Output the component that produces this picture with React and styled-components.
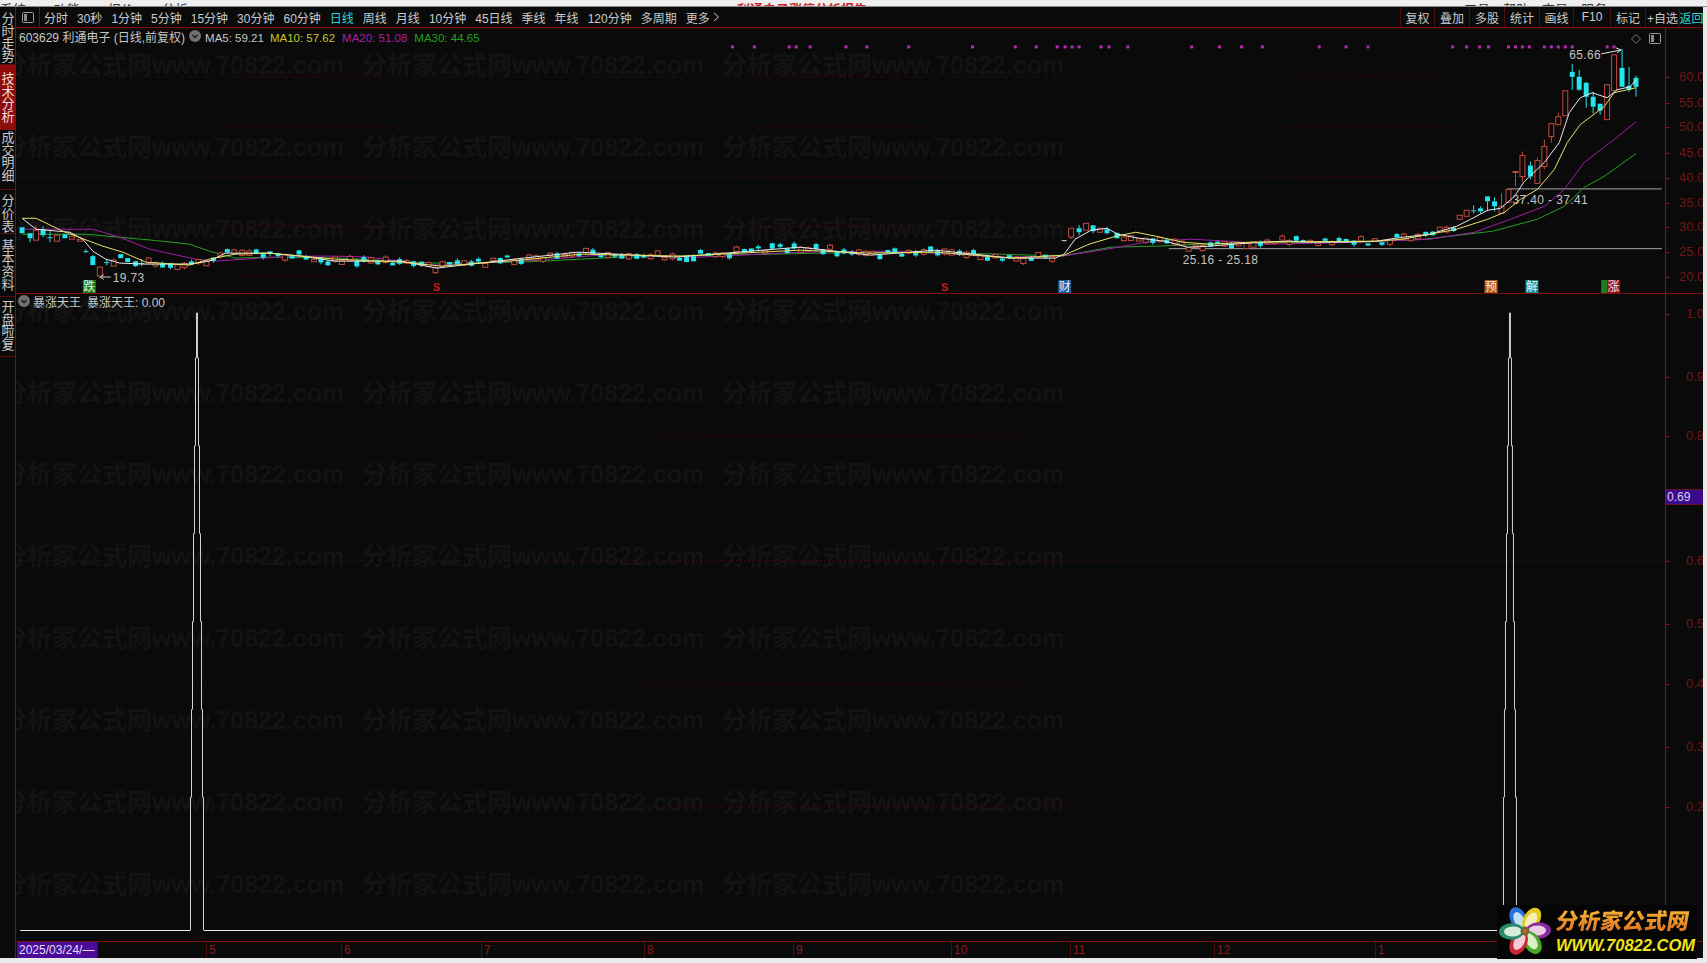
import React from "react";
import styled, { createGlobalStyle } from "styled-components";

const FONT = `"Liberation Sans", "Noto Sans CJK SC", sans-serif`;
const LINE = "#7c1010";
const BG = "#0a0a0a";

const Global = createGlobalStyle`
  html, body { margin: 0; padding: 0; background: #ececec; overflow: hidden; }
  * { box-sizing: border-box; }
`;

const Page = styled.div`
  position: relative; width: 1707px; height: 963px; background: #e9e9e9;
  display: flex; flex-direction: column; overflow: hidden; font-family: ${FONT};
`;
const TopStrip = styled.div`
  flex: 0 0 7px; background: #eeeeee; overflow: hidden; display: flex;
  justify-content: space-between; align-items: flex-end; padding: 0;
  border-bottom: 1px solid #8c8c8c;
`;
const StripGroup = styled.div`
  display: flex; gap: ${p => p.$gap}px; margin: 0 ${p => p.$mr || 0}px -12px 0; font-size: 13px; line-height: 16px;
  color: ${p => p.$color || "#333"}; font-weight: ${p => p.$bold ? 700 : 400};
`;
const Body = styled.div`
  flex: 0 0 951px; width: 1703px; display: flex; background: ${BG}; overflow: hidden;
`;
const Rail = styled.div`
  position: relative; z-index: 2; flex: 0 0 16px; background: ${BG}; border-right: 1px solid ${LINE};
  display: flex; flex-direction: column;
`;
const RailTab = styled.div`
  height: ${p => p.$h}px; width: 15px; padding-top: ${p => p.$pt || 0}px;
  background: ${p => p.$active ? "#8e0c0c" : "transparent"};
  border-bottom: 1px solid ${p => p.$active ? "#8e0c0c" : "#5c0e0e"};
  color: ${p => p.$active ? "#f2dada" : "#c8c8c8"};
  font-size: 13px; line-height: ${p => p.$lh || 12.5}px; text-align: center; overflow: hidden;
  word-break: break-all; padding-left: 1px; padding-right: 1px; letter-spacing: -1px;
`;
const Main = styled.div`
  position: relative; flex: 1; min-width: 0; display: flex; flex-direction: column;
`;
const Watermarks = styled.div`
  position: absolute; left: -14px; top: 15px; width: 1100px;
  display: grid; grid-template-columns: repeat(3, 360px); grid-auto-rows: 81.9px; align-items: center;
  color: #131313; font-size: 25px; font-weight: 700; white-space: nowrap; pointer-events: none;
`;
const Toolbar = styled.div`
  position: relative; flex: 0 0 21px; display: flex; align-items: center; justify-content: space-between;
  border-bottom: 1px solid ${LINE}; color: #c9c9c9; font-size: 12px;
`;
const ToolGroup = styled.div`
  display: flex; align-items: center; height: 100%;
`;
const ToolToggle = styled.div`
  width: 24px; height: 100%; display: flex; align-items: center; justify-content: center;
  border-right: 1px solid ${LINE}; margin-right: 4px;
`;
const PeriodList = styled.div`
  display: flex; gap: 9px; align-items: center;
`;
const Period = styled.span`
  color: ${p => p.$active ? "#2fd3d6" : "#cacaca"}; white-space: nowrap;
`;
const ToolBtn = styled.span`
  height: 100%; width: ${p => p.$w}px; display: flex; align-items: center; justify-content: center;
  border-left: 1px solid #4c0d0d; white-space: nowrap; flex: none;
  color: ${p => p.$cyan ? "#2fd3d6" : "#cacaca"};
`;
const Panel = styled.div`
  position: relative; flex: 0 0 ${p => p.$h}px; display: flex; border-bottom: 1px solid ${LINE};
`;
const Plot = styled.div`
  position: relative; flex: 0 0 1649px; height: 100%;
`;
const ChartSvg = styled.svg`
  position: absolute; inset: 0; width: 100%; height: 100%; display: block;
`;
const Legend = styled.div`
  position: absolute; left: ${p => p.$left}px; top: ${p => p.$top}px; display: flex; align-items: center;
  font-size: 12px; line-height: 16px; white-space: nowrap; color: #c6c6c6;
`;
const LegendItem = styled.span`
  color: ${p => p.$color || "#c6c6c6"}; margin-left: ${p => p.$ml || 0}px;
  font-size: ${p => p.$small ? 11.5 : 12}px;
`;
const Axis = styled.div`
  position: relative; flex: 1; border-left: 1px solid #8e1010; overflow: hidden;
`;
const AxisLabel = styled.span`
  position: absolute; left: ${p => p.$left}px; color: #701616; font-size: 13px; line-height: 14px; white-space: nowrap;
  &::before { content: ""; position: absolute; left: -${p => p.$left}px; top: 7px; width: 4px; height: 1px; background: #7c1414; }
`;
const PriceTag = styled.span`
  position: absolute; left: 0; top: ${p => p.$top}px; width: 100%; height: 16px; background: #3c0a8c;
  border-top: 1px solid #6c1020; border-bottom: 1px solid #6c1020;
  color: #d8d0ee; font-size: 12px; line-height: 14px; padding-left: 1px;
`;
const TimeBar = styled.div`
  flex: 0 0 16px; display: flex; align-items: stretch; color: #8a1a1a; font-size: 12px; line-height: 16px;
  border-bottom: 1px solid #5c0e0e;
`;
const DateTag = styled.div`
  flex: 0 0 80px; margin-left: 1px; background: #4a0c98; color: #e2dcf4; padding-left: 2px; white-space: nowrap;
  font-size: 12px; overflow: hidden;
`;
const TimeCell = styled.div`
  width: ${p => p.$w}px; flex: none; padding-left: 2px; border-left: 1px solid #4c0d0d;
`;
const Logo = styled.div`
  position: absolute; left: 1497px; top: 905px; width: 200px; height: 54px; background: #050505;
  display: flex; align-items: center; z-index: 3;
`;
const LogoText = styled.div`
  display: flex; flex-direction: column; margin-left: 3px; gap: 2px;
`;
const LogoCn = styled.div`
  font-size: 22px; line-height: 24px; font-weight: 900; letter-spacing: 0.2px; white-space: nowrap;
  transform: skewX(-10deg); transform-origin: left;
  background: linear-gradient(180deg, #f6b437, #dd6a1c); -webkit-background-clip: text; background-clip: text;
  color: transparent;
`;
const LogoEn = styled.div`
  font-size: 16.5px; line-height: 18px; font-weight: 700; font-style: italic; color: #efe21e; white-space: nowrap;
`;

const wm = Array.from({ length: 33 }, (_, i) => i);
const periods = ["分时", "30秒", "1分钟", "5分钟", "15分钟", "30分钟", "60分钟", "日线", "周线", "月线", "10分钟", "45日线", "季线", "年线", "120分钟", "多周期", "更多"];
const tools = [["复权", 34], ["叠加", 35], ["多股", 35], ["统计", 35], ["画线", 34], ["F10", 37], ["标记", 35], ["+自选", 34]];
const rail = [
  { t: "分时走势", h: 58, pt: 6 }, { t: "技术分析", h: 65, pt: 8, a: 1 }, { t: "成交明细", h: 60, pt: 2 },
  { t: "分价表", h: 44, pt: 4, lh: 13 }, { t: "基本资料", h: 63, pt: 5, lh: 13 }, { t: "开盘啦复", h: 60, pt: 4 },
];

const MA5 = [[19,219],[33,230],[67,233],[80,240],[90,252],[103,260],[117,264],[143,265],[187,265],[207,262],[223,254],[267,254],[300,257],[333,262],[400,262],[435,269],[522,259],[577,253],[675,258],[800,248],[871,256],[936,251],[1012,259],[1056,259],[1065,255],[1076,240],[1092,231],[1108,229],[1119,235],[1140,239],[1166,242],[1189,248],[1211,247],[1234,245],[1265,243],[1288,242],[1315,243],[1342,243],[1378,242],[1405,238],[1432,235],[1459,227],[1473,220],[1490,211],[1503,209],[1517,197],[1527,182],[1547,163],[1562,143],[1572,113],[1583,98],[1595,93],[1610,98],[1620,90],[1633,87],[1639,80]];
const MA10 = [[19,219],[33,219],[60,232],[100,247],[120,253],[143,263],[187,266],[207,260],[233,255],[267,254],[333,260],[400,263],[440,267],[520,261],[580,255],[680,257],[800,251],[870,254],[936,253],[1012,259],[1065,256],[1090,245],[1117,237],[1137,233],[1157,237],[1184,243],[1211,245],[1252,243],[1378,242],[1405,240],[1459,230],[1490,220],[1507,213],[1523,200],[1540,190],[1557,170],[1570,143],[1583,125],[1607,107],[1617,93],[1639,88]];
const MA20 = [[19,230],[50,230],[90,230],[117,238],[147,250],[193,260],[213,262],[257,259],[300,257],[333,257],[367,258],[430,266],[520,262],[600,256],[700,258],[800,253],[900,252],[1000,258],[1063,257],[1108,250],[1153,242],[1193,240],[1230,242],[1270,245],[1360,243],[1432,240],[1477,233],[1513,220],[1547,207],[1567,190],[1587,163],[1617,140],[1639,122]];
const MA30 = [[19,235],[83,235],[117,238],[160,242],[187,245],[207,252],[233,259],[267,258],[340,259],[430,264],[520,263],[620,258],[720,256],[820,254],[900,253],[1000,255],[1063,257],[1112,248],[1157,247],[1202,245],[1270,243],[1360,243],[1427,240],[1495,232],[1540,220],[1567,207],[1587,188],[1607,177],[1639,154]];

const at = (line, x) => {
  for (let i = 1; i < line.length; i++) {
    if (x <= line[i][0]) {
      const [a, b] = line[i - 1], [c, d] = line[i];
      return b + (d - b) * (x - a) / (c - a);
    }
  }
  return line[line.length - 1][1];
};
const pts = l => l.map(p => p.join(",")).join(" ");

// [x, bodyTop, bodyBottom, wickTop, wickBottom, up]
const endCandles = [
  [1639,78,87,76,97,0],[1632,86,90,67,92,0],[1625,68,87,49,87,0],[1617,55,91,55,91,1],[1610,85,120,85,120,1],
  [1603,104,111,104,115,0],[1596,97,107,92,114,0],[1589,83,97,82,108,0],[1582,77,90,70,91,0],[1575,72,77,64,90,0],
  [1568,91,116,91,116,1],[1561,117,125,113,125,1],[1554,124,137,124,143,1],[1547,147,167,140,170,1],[1540,161,184,158,184,1],
  [1533,166,177,162,180,0],[1525,156,177,152,182,1],[1518,172,173,172,187,1],[1511,190,203,190,203,1],[1504,207,214,194,214,1],
  [1497,202,207,198,212,0],[1490,197,202,197,212,0],[1483,209,212,207,214,0],[1476,211,212,206,214,0],[1469,211,217,211,217,1],[1462,216,220,216,220,1],
];
const startCandles = [
  [19,228,234,228,234,0],[27,234,239,234,243,0],[33,231,241,226,241,1],[40,230,236,227,238,0],[47,238,239,232,243,0],[54,236,242,236,242,1],
  [62,235,239,235,239,0],[69,237,240,237,240,1],[77,240,242,240,242,1],[83,252,253,250,254,0],[90,257,266,256,266,0],[97,268,277,268,280,1],
  [104,263,264,260,266,0],[111,261,267,259,267,1],[118,255,259,255,259,0],[125,259,263,259,263,0],[133,262,267,262,268,0],[139,264,265,260,267,0],
];
const midCandles = [
  [1065,241,242,241,242,2],[1072,229,238,229,240,1],[1080,229,233,226,236,0],[1087,224,231,224,231,1],[1094,226,232,226,234,0],[1101,229,233,229,233,1],[1108,230,234,228,235,0],
];
function buildCandles() {
  let seed = 7;
  const rnd = () => (seed = (seed * 16807) % 2147483647) / 2147483647;
  const out = [...startCandles, ...midCandles, ...endCandles];
  for (let x = 146; x < 1460; x += 7.2) {
    if (x > 1060 && x < 1112) continue;
    const c = at(MA5, x) + (rnd() - 0.5) * 7;
    const h = 2 + rnd() * 3.5;
    out.push([Math.round(x), c - h / 2, c + h / 2, c - h / 2 - rnd() * 2, c + h / 2 + rnd() * 2, rnd() > 0.5 ? 1 : 0]);
  }
  return out;
}
const candles = buildCandles();
const dots = [732,754,789,796,810,846,867,909,973,1016,1037,1058,1066,1073,1080,1102,1110,1129,1193,1221,1243,1264,1321,1348,1370,1455,1469,1482,1491,1511,1518,1525,1532,1547,1554,1561,1568,1575,1610,1617];
const topAxis = [[60,70],[55,96],[50,120],[45,146],[40,171],[35,196],[30,220],[25,245],[20,270]];
const subAxis = [["1.0",314],["0.9",377],["0.8",436],["0.6",561],["0.5",624],["0.4",684],["0.3",747],["0.2",807]];

const spike = c => {
  const levels = [[313,.5],[358,1.5],[446,2.5],[534,3.5],[622,4.5],[710,5.5],[798,6.5],[931,6.75]];
  const left = [], right = [];
  levels.forEach(([y, w], i) => {
    const end = i + 1 < levels.length ? levels[i + 1][0] : 931;
    left.push(`L${c - w},${y} L${c - w},${end}`);
    right.push(`L${c + w},${y} L${c + w},${end}`);
  });
  return { up: `M${c},313 ${left.join(" ")}`, down: `M${c},313 ${right.join(" ")}` };
};

const PanelIcon = () => (
  <svg width="12" height="11" viewBox="0 0 12 11">
    <rect x="0.5" y="0.5" width="11" height="10" rx="1" fill="none" stroke="#9a9a9a" />
    <rect x="2" y="2" width="3" height="7" fill="#8a8a8a" />
  </svg>
);
const DownBadge = () => (
  <svg width="12" height="12" viewBox="0 0 12 12">
    <circle cx="6" cy="6" r="6" fill="#707070" />
    <path d="M3.5 5 L6 7.5 L8.5 5" fill="none" stroke="#1a1a1a" strokeWidth="1.3" />
  </svg>
);

const Petal = ({ rot, color, soft }) => (
  <g transform={`rotate(${rot} 28 26)`}>
    <ellipse cx="28" cy="12.5" rx="8.2" ry="12.5" fill={color} />
    <ellipse cx="28" cy="14" rx="5" ry="9" fill={soft} />
  </g>
);
const Flower = () => (
  <svg width="56" height="54" viewBox="0 0 56 54" style={{ flex: "none" }}>
    <Petal rot={-28} color="#2a72d8" soft="#bfe2f4" />
    <Petal rot={30} color="#e8c818" soft="#f4eeb8" />
    <Petal rot={88} color="#8a2a9c" soft="#eccfe6" />
    <Petal rot={148} color="#4aa82a" soft="#dcefc4" />
    <Petal rot={208} color="#c82a3a" soft="#f6ccd4" />
    <Petal rot={268} color="#2a8a6a" soft="#d8ecdc" />
    <circle cx="28" cy="26" r="4.5" fill="#6a6a3a" />
    <circle cx="28" cy="26" r="2" fill="#c8682a" />
  </svg>
);

const App = () => {
  const s1 = spike(196), s2 = spike(1511);
  return (
    <Page>
      <Global />
      <TopStrip>
        <StripGroup $gap={28}><span>系统</span><span>功能</span><span>报价</span><span>分析</span></StripGroup>
        <StripGroup $gap={0} $color="#c8222a" $bold $mr={48}><span>利通电子涨停分析报告</span></StripGroup>
        <StripGroup $gap={13} $mr={100}><span>工具</span><span>帮助</span><span>交易</span><span>服务</span></StripGroup>
      </TopStrip>
      <Body>
        <Rail>
          {rail.map(r => <RailTab key={r.t} $h={r.h} $pt={r.pt} $lh={r.lh} $active={r.a}>{r.t}</RailTab>)}
        </Rail>
        <Main>
          <Watermarks>{wm.map(i => <span key={i}>分析家公式网www.70822.com</span>)}</Watermarks>
          <Toolbar>
            <ToolGroup>
              <ToolToggle><PanelIcon /></ToolToggle>
              <PeriodList>
                {periods.map(p => <Period key={p} $active={p === "日线"}>{p}</Period>)}
                <svg width="7" height="10" viewBox="0 0 7 10" style={{ marginLeft: -6 }}><path d="M1 1 L5.5 5 L1 9" fill="none" stroke="#cacaca" /></svg>
              </PeriodList>
            </ToolGroup>
            <ToolGroup>
              {tools.map(([t, w]) => <ToolBtn key={t} $w={w}>{t}</ToolBtn>)}
              <ToolBtn $w={24} $cyan>返回</ToolBtn>
            </ToolGroup>
          </Toolbar>

          <Panel $h={266}>
            <Plot>
              <ChartSvg viewBox="16 28 1649 266">
                {[77, 127, 177, 227, 277].map(y => <line key={y} x1="16" x2="1665" y1={y} y2={y} stroke="#4e1212" strokeDasharray="1 3" />)}
                <line x1="1170" x2="1665" y1="249.5" y2="249.5" stroke="#a8a8a8" />
                <line x1="1510" x2="1665" y1="189.5" y2="189.5" stroke="#a8a8a8" />
                {dots.map(x => <rect key={x} x={x - 1.5} y="45.5" width="3" height="3" fill="#b42ab4" />)}
                <polyline points={pts(MA30)} fill="none" stroke="#25a025" strokeWidth="1" />
                <polyline points={pts(MA20)} fill="none" stroke="#a01fa8" strokeWidth="1" />
                {candles.map((c, i) => {
                  const [x, t, b, wt, wb, up] = c;
                  const col = up === 1 ? "#c24a3c" : up === 2 ? "#e0e0e0" : "#25e4ee";
                  return (
                    <g key={i}>
                      <line x1={x} x2={x} y1={wt} y2={t} stroke={col} />
                      <line x1={x} x2={x} y1={b} y2={wb} stroke={col} />
                      <rect x={x - 2.5} y={t} width="5" height={Math.max(b - t, 1)} fill={up === 1 ? BG : col} stroke={up === 1 ? col : "none"} />
                    </g>
                  );
                })}
                <polyline points={pts(MA5)} fill="none" stroke="#e8e8e8" strokeWidth="1" />
                <polyline points={pts(MA10)} fill="none" stroke="#e6e26a" strokeWidth="1" />
                <g fontFamily={FONT} fontSize="12" fill="#c4c4c4" letterSpacing="0.4">
                  <text x="110" y="283">19.73</text>
                  <text x="1184" y="265">25.16 - 25.18</text>
                  <text x="1515" y="205">37.40 - 37.41</text>
                  <text x="1572" y="59">65.66</text>
                </g>
                <path d="M108 278 H98 M101 275.5 L97.5 278 L101 280.5" fill="none" stroke="#c8c8c8" />
                <path d="M1604 54 L1624 50 M1619 48 L1624 50 L1620 53" fill="none" stroke="#e0e0e0" />
                <g fontFamily={FONT} fontSize="12" textAnchor="middle">
                  <rect x="83" y="281" width="13" height="13" fill="#1d7e1d" transform="translate(-3 0)" />
                  <text x="86.5" y="292" fill="#e4f4e4">跌</text>
                  <rect x="1059" y="281" width="13" height="13" fill="#1e5aa0" />
                  <text x="1065.5" y="292" fill="#e4eef8">财</text>
                  <rect x="1487" y="281" width="13" height="13" fill="#b85a1c" />
                  <text x="1493.5" y="292" fill="#f8e8d8">预</text>
                  <rect x="1528" y="281" width="13" height="13" fill="#1c8a8e" />
                  <text x="1534.5" y="292" fill="#e4f6f6">解</text>
                  <rect x="1604" y="281" width="6" height="13" fill="#1d7e1d" />
                  <rect x="1610" y="281" width="13" height="13" fill="#9a1414" />
                  <text x="1616.5" y="292" fill="#f8e0e0">涨</text>
                </g>
                <g fontFamily={FONT} fontSize="11" fontWeight="700" fill="#c81a1a" textAnchor="middle">
                  <text x="435" y="292">S</text>
                  <text x="945" y="292">S</text>
                </g>
                <path d="M1639 34.5 L1643.5 39 L1639 43.5 L1634.5 39 Z" fill="none" stroke="#7a7a7a" />
              </ChartSvg>
              <Legend $left={3} $top={2}>
                <LegendItem>603629 利通电子 (日线,前复权)</LegendItem>
                <LegendItem $ml={4}><DownBadge /></LegendItem>
                <LegendItem $ml={4} $small>MA5: 59.21</LegendItem>
                <LegendItem $ml={6} $small $color="#c6c62a">MA10: 57.62</LegendItem>
                <LegendItem $ml={7} $small $color="#a620a8">MA20: 51.08</LegendItem>
                <LegendItem $ml={7} $small $color="#22a022">MA30: 44.65</LegendItem>
              </Legend>
              <Legend $left={1633} $top={5}><PanelIcon /></Legend>
            </Plot>
            <Axis>
              {topAxis.map(([v, y]) => <AxisLabel key={v} $left={13} style={{ top: y - 28 }}>{v}.00</AxisLabel>)}
            </Axis>
          </Panel>

          <Panel $h={648}>
            <Plot>
              <ChartSvg viewBox="16 294 1649 648">
                {[436, 561, 684, 807].map(y => <line key={y} x1="16" x2="1665" y1={y} y2={y} stroke="#4e1212" strokeDasharray="1 3" />)}
                <path d="M19 931.5 H189.25" stroke="#ececec" strokeWidth="1.2" fill="none" />
                <path d="M202.75 931.5 H1504.25" stroke="#ececec" strokeWidth="1.2" fill="none" />
                <path d={s1.up} stroke="#d2d2d2" strokeWidth="1" fill="none" />
                <path d={s1.down} stroke="#d2d2d2" strokeWidth="1" fill="none" />
                <path d={s2.up} stroke="#d2d2d2" strokeWidth="1" fill="none" />
                <path d={s2.down} stroke="#d2d2d2" strokeWidth="1" fill="none" />
              </ChartSvg>
              <Legend $left={2} $top={1}>
                <LegendItem><DownBadge /></LegendItem>
                <LegendItem $ml={3}>暴涨天王</LegendItem>
                <LegendItem $ml={6}>暴涨天王: 0.00</LegendItem>
              </Legend>
            </Plot>
            <Axis>
              {subAxis.map(([v, y]) => <AxisLabel key={v} $left={20} style={{ top: y - 294 - 7 }}>{v}00</AxisLabel>)}
              <PriceTag $top={195}>0.69</PriceTag>
            </Axis>
          </Panel>

          <TimeBar>
            <DateTag>2025/03/24/—</DateTag>
            <TimeCell $w={109} />
            <TimeCell $w={135}>5</TimeCell>
            <TimeCell $w={140}>6</TimeCell>
            <TimeCell $w={163}>7</TimeCell>
            <TimeCell $w={149}>8</TimeCell>
            <TimeCell $w={158}>9</TimeCell>
            <TimeCell $w={119}>10</TimeCell>
            <TimeCell $w={144}>11</TimeCell>
            <TimeCell $w={161}>12</TimeCell>
            <TimeCell $w={120}>1</TimeCell>
          </TimeBar>
        </Main>
      </Body>
      <Logo>
        <Flower />
        <LogoText>
          <LogoCn>分析家公式网</LogoCn>
          <LogoEn>WWW.70822.COM</LogoEn>
        </LogoText>
      </Logo>
    </Page>
  );
};

export default App;
